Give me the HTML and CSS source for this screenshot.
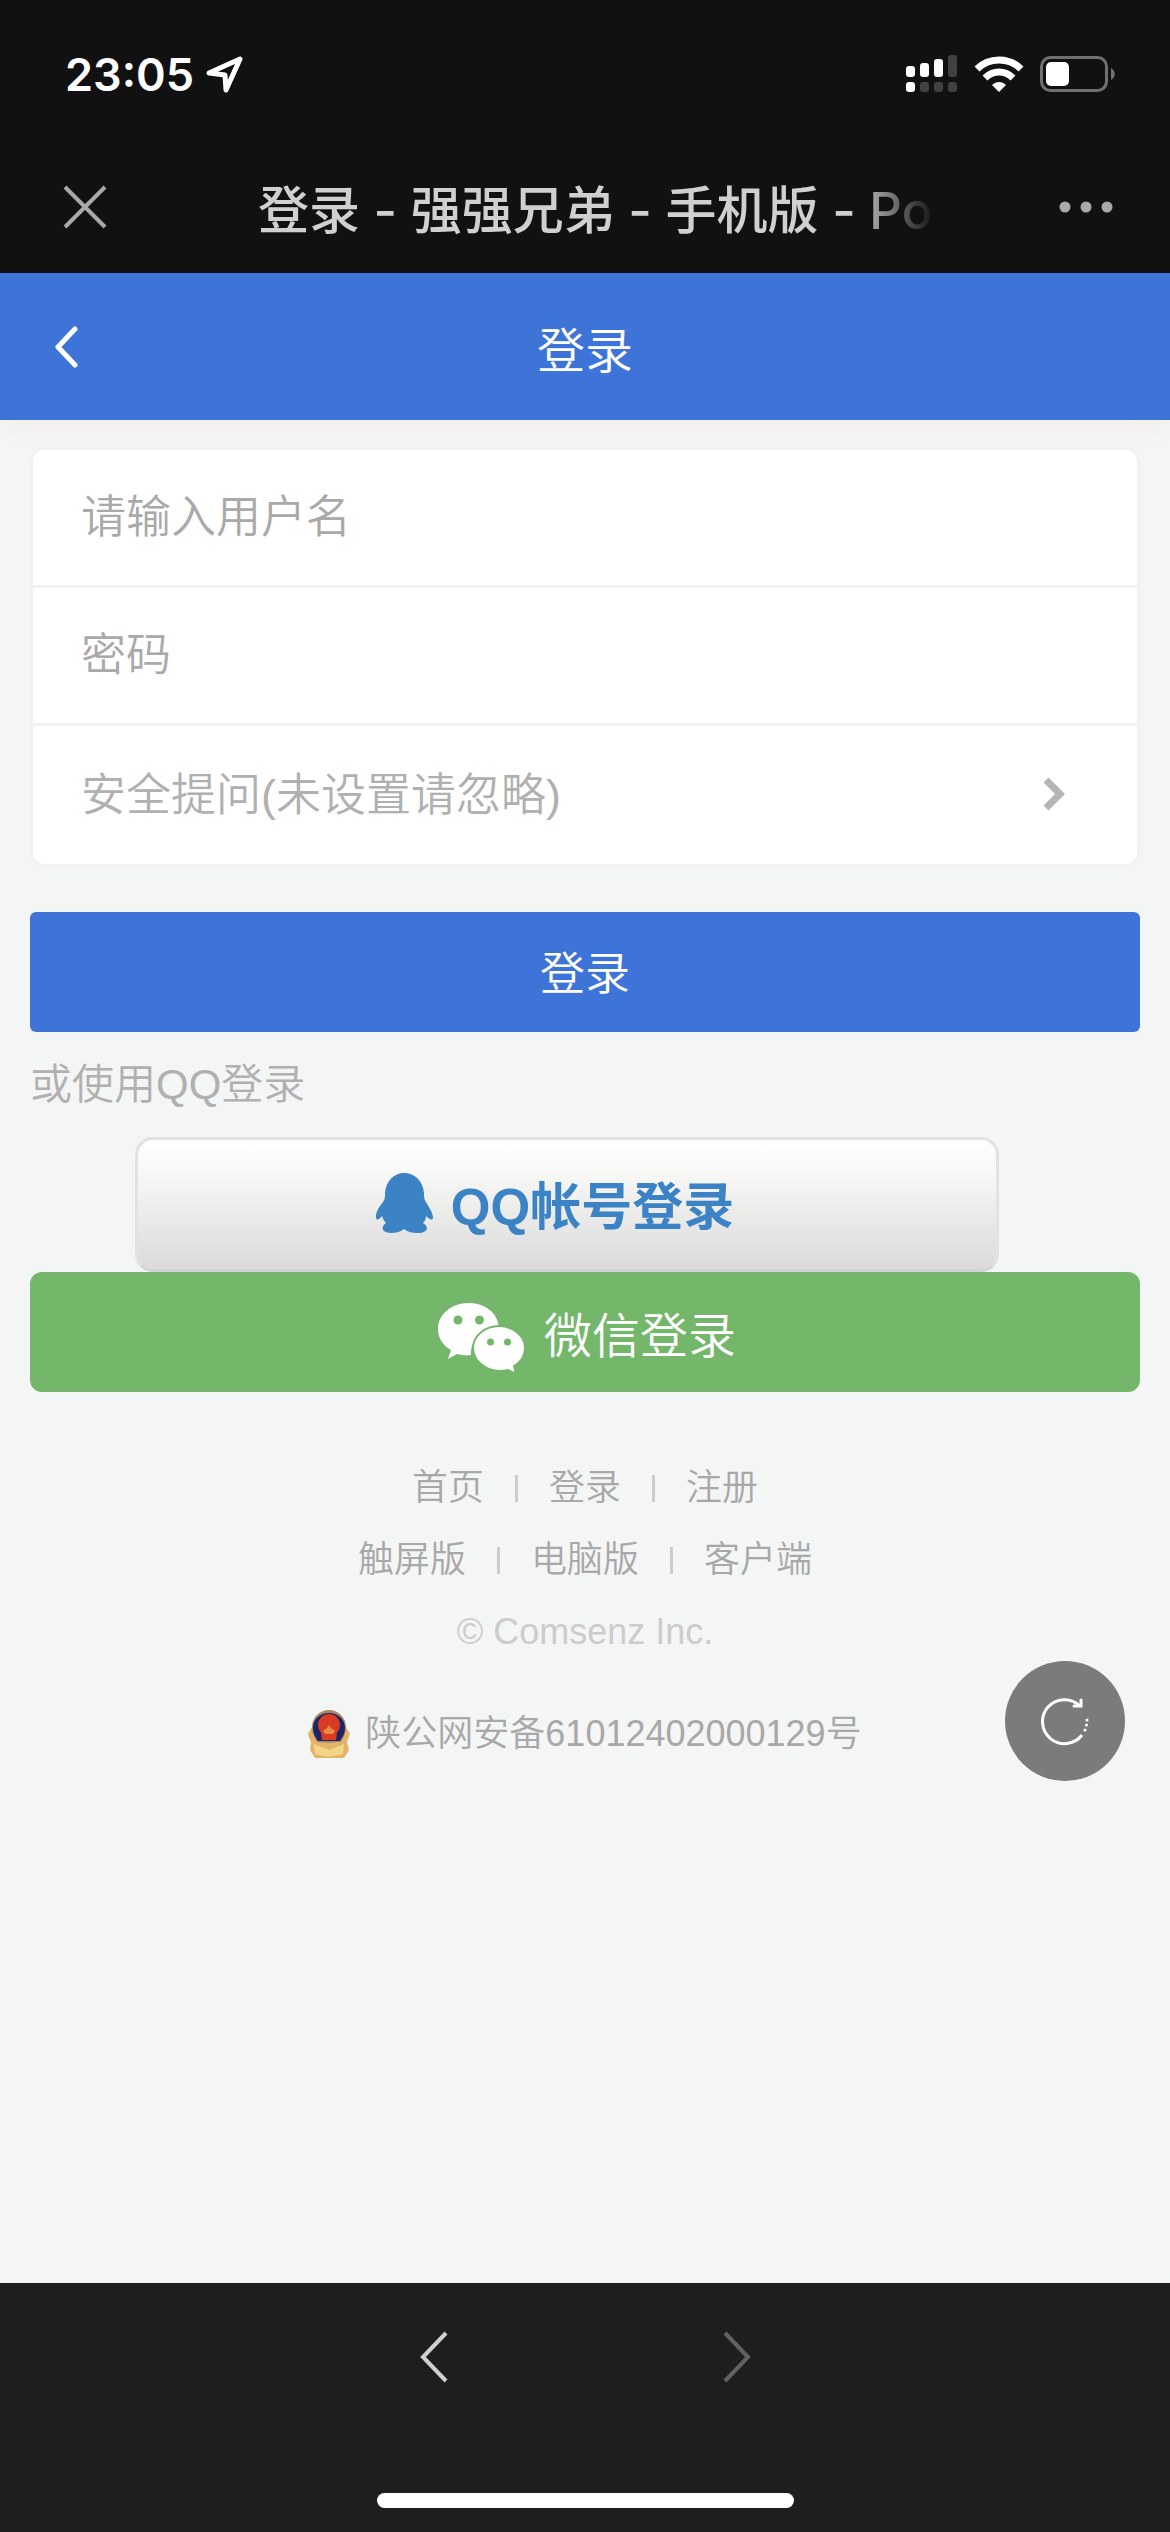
FILE: index.html
```html
<!DOCTYPE html>
<html lang="zh-CN">
<head>
  <meta charset="UTF-8">
  <meta name="viewport" content="width=device-width, initial-scale=1">
  <title>登录 - 强强兄弟 - 手机版</title>
  <link rel="stylesheet" href="styles.css">
</head>
<body>
  <div class="top">
    <div class="status">
      <span class="time">23:05</span>
      <svg class="location" width="37" height="37" viewBox="0 0 37 37"><path d="M3 17 L34 3 L20 34 L19 19 Z" fill="none" stroke="#fff" stroke-width="5" stroke-linejoin="round"/></svg>
      <div class="status-icons">
        <svg width="52" height="38" viewBox="0 0 52 38">
          <g fill="#fff">
            <rect x="0" y="11" width="9" height="11" rx="3"/>
            <rect x="14" y="8" width="9" height="14" rx="3"/>
            <rect x="28" y="4" width="9" height="18" rx="3"/>
            <rect x="0" y="27" width="9" height="10" rx="3"/>
          </g>
          <g fill="#414141">
            <rect x="42" y="0" width="9" height="22" rx="3"/>
            <rect x="14" y="27" width="9" height="10" rx="3"/>
            <rect x="28" y="27" width="9" height="10" rx="3"/>
            <rect x="42" y="27" width="9" height="10" rx="3"/>
          </g>
        </svg>
        <svg width="50" height="37" viewBox="0 0 50 37">
          <path d="M3 13 C15 1 35 1 47 13" fill="none" stroke="#fff" stroke-width="7"/>
          <path d="M11 22 C19 14 31 14 39 22" fill="none" stroke="#fff" stroke-width="7"/>
          <path d="M25 36 L18 29 C22 25 28 25 32 29 Z" fill="#fff"/>
        </svg>
        <svg width="76" height="37" viewBox="0 0 76 37">
          <rect x="1.5" y="1.5" width="65" height="33" rx="9" fill="none" stroke="#707070" stroke-width="3"/>
          <rect x="6" y="6" width="23" height="24" rx="5" fill="#fff"/>
          <path d="M71 12 C76 15 76 21 71 24 Z" fill="#707070"/>
        </svg>
      </div>
    </div>
    <div class="webview-bar">
      <button class="icon-btn" aria-label="关闭"><svg width="44" height="44" viewBox="0 0 44 44"><path d="M2 2 L42 42 M42 2 L2 42" stroke="#a9a9a9" stroke-width="4"/></svg></button>
      <div class="webview-title">登录 - 强强兄弟 - 手机版 - Pow</div>
      <button class="icon-btn" aria-label="更多"><svg width="54" height="12" viewBox="0 0 54 12"><g fill="#a9a9a9"><circle cx="6" cy="6" r="5.5"/><circle cx="27" cy="6" r="5.5"/><circle cx="48" cy="6" r="5.5"/></g></svg></button>
    </div>
  </div>

  <main>
    <header class="header">
      <a href="#" class="back" aria-label="返回"><svg width="24" height="42" viewBox="0 0 24 42"><path d="M21 3 L4 21 L21 39" fill="none" stroke="#fff" stroke-width="5" stroke-linecap="round" stroke-linejoin="round"/></svg></a>
      <h1>登录</h1>
    </header>

    <form class="login">
      <div class="fields">
        <input class="field" type="text" name="username" placeholder="请输入用户名" aria-label="请输入用户名">
        <input class="field" type="password" name="password" placeholder="密码" aria-label="密码">
        <div class="question">
          <select class="field" name="questionid" aria-label="安全提问">
            <option>安全提问(未设置请忽略)</option>
          </select>
          <svg class="arrow" width="22" height="34" viewBox="0 0 22 34"><path d="M3 3 L17 17 L3 31" fill="none" stroke="#b5b5b5" stroke-width="7"/></svg>
        </div>
      </div>
      <button class="btn submit" type="button">登录</button>
      <p class="or">或使用QQ登录</p>
      <button class="qq" type="button">
        <svg width="57" height="68" viewBox="0 0 57 60" preserveAspectRatio="none"><path d="M28 0 C39 0 47 8 48 20 C48 24 48 26 50 29 C53 34 57 40 57 45 C56 48 53 46 50 43 C50 46 49 48 47 50 C54 54 51 60 42 60 C36 60 32 59 28 56 C24 59 20 60 15 60 C6 60 4 54 10 50 C8 48 7 46 6 43 C4 46 1 48 0 45 C-1 40 3 34 7 29 C9 26 9 24 9 20 C10 8 18 0 28 0 Z" fill="#3b83c4"/></svg>
        <span>QQ帐号登录</span>
      </button>
      <button class="btn wechat" type="button">
        <svg width="88" height="72" viewBox="0 0 88 72">
          <path d="M30.5 0 C47 0 60 10 61 25 L61 26 C46 26 33 36 33 50 L33 52 C28 53 24 52 19 51 L10 56 L13 47 C4 42 0 34 0 26 C0 11 14 0 30.5 0 Z" fill="#fff"/>
          <path d="M61 23 C75 23 87 33 87 45 C87 53 83 59 76 63 L78 71 L70 67 C54 71 35 61 35 45 C35 33 47 23 61 23 Z" fill="#fff" stroke="#74b76a" stroke-width="2"/>
          <g fill="#74b76a"><circle cx="20" cy="17" r="4.5"/><circle cx="41.5" cy="17" r="4.5"/><circle cx="52.5" cy="39" r="3.5"/><circle cx="69.5" cy="39" r="3.5"/></g>
        </svg>
        <span>微信登录</span>
      </button>
    </form>

    <footer class="footer">
      <nav class="links"><a href="#">首页</a><i></i><a href="#">登录</a><i></i><a href="#">注册</a></nav>
      <nav class="links"><a href="#">触屏版</a><i></i><a href="#">电脑版</a><i></i><a href="#">客户端</a></nav>
      <p class="copyright">© Comsenz Inc.</p>
      <a href="#" class="record">
        <svg width="42" height="48" viewBox="0 0 42 48">
          <path d="M5 15 L0 24 L3 32 L2 40 L7 48 L36 48 L41 40 L39 32 L42 24 L37 15 Z" fill="#e3b468"/>
          <path d="M6 34 L21 40 L36 34 L35 44 L21 47 L7 44 Z" fill="#f3d588"/>
          <path d="M21 0 C31 0 38 8 38 17 C38 24 35 28 33 32 L21 33 L9 32 C7 28 4 24 4 17 C4 8 11 0 21 0 Z" fill="#a98a62"/>
          <path d="M21 3 C31 3 37 10 37 18 C37 24 34 28 32 31 L10 31 C8 28 5 24 5 18 C5 10 11 3 21 3 Z" fill="#1d2467"/>
          <circle cx="21" cy="15" r="11" fill="#d83a22"/>
          <path d="M13 22 L29 22 L28 30 L14 30 Z" fill="#d83a22"/>
          <path d="M15 21 L19 18 L21 15 L23 18 L27 21 L25 24 L17 24 Z" fill="#e98b45"/>
        </svg>
        <span>陕公网安备61012402000129号</span>
      </a>
    </footer>

    <button class="refresh" aria-label="刷新">
      <svg width="50" height="50" viewBox="0 0 50 50">
        <path d="M42 39 A22 22 0 1 1 40 10" fill="none" stroke="#fff" stroke-width="3"/>
        <path d="M41 4 V10 H34" fill="none" stroke="#fff" stroke-width="3" stroke-linecap="round"/>
        <g fill="#fff"><circle cx="47" cy="24" r="1.5"/><circle cx="46.5" cy="29" r="1.5"/><circle cx="45" cy="34" r="1.5"/></g>
      </svg>
    </button>
  </main>

  <div class="bottom">
    <div class="history">
      <button class="icon-btn" aria-label="后退"><svg width="28" height="52" viewBox="0 0 28 52"><path d="M26 2 L3 26 L26 50" fill="none" stroke="#d0d0d0" stroke-width="4"/></svg></button>
      <button class="icon-btn" aria-label="前进"><svg width="28" height="52" viewBox="0 0 28 52"><path d="M2 2 L25 26 L2 50" fill="none" stroke="#616161" stroke-width="4"/></svg></button>
    </div>
    <div class="home-indicator"></div>
  </div>
</body>
</html>
```

FILE: styles.css
```css
* {
  box-sizing: border-box;
}
body {
  margin: 0;
  min-height: 100vh;
  display: flex;
  flex-direction: column;
  background: #f4f6f6;
  font-family: "Liberation Sans", "Noto Sans CJK SC", sans-serif;
  font-weight: 350;
}
a {
  color: inherit;
  text-decoration: none;
}
button, input, select {
  font: inherit;
  border: 0;
  padding: 0;
}
h1, p {
  margin: 0;
  font-weight: inherit;
}
svg {
  display: block;
  flex: none;
}
.icon-btn {
  background: none;
}

/* system bar and webview title, above the header's shadow */
.top {
  position: relative;
  z-index: 1;
  background: #111;
}
.status {
  height: 140px;
  padding: 8px 54px 0 65px;
  display: flex;
  align-items: center;
  color: #fff;
}
.time {
  font-family: Inter, sans-serif;
  font-size: 45px;
  font-weight: 600;
}
.location {
  margin-left: 12px;
}
.status-icons {
  display: flex;
  align-items: center;
  gap: 16px;
  margin-left: auto;
}
.webview-bar {
  height: 133px;
  padding: 0 57px 0 63px;
  display: flex;
  align-items: center;
}
.webview-title {
  flex: 1;
  margin: 0 124px 0 151px;
  overflow: hidden;
  white-space: nowrap;
  color: #d0d0d0;
  font-family: Inter, "Noto Sans CJK SC", sans-serif;
  font-size: 51px;
  font-weight: 500;
  -webkit-mask-image: linear-gradient(to right, #000 88%, transparent);
  mask-image: linear-gradient(to right, #000 88%, transparent);
}

/* page */
main {
  flex: 1;
  position: relative;
}
.header {
  height: 147px;
  padding: 0 54px;
  display: flex;
  align-items: center;
  background: #3e74d8;
  color: #fff;
  box-shadow: 0 3px 30px #f2e9e8;
}
.header h1 {
  flex: 1;
  padding-right: 24px;
  font-size: 48px;
  text-align: center;
}
.login {
  padding: 27px 30px 0;
}
.fields {
  border: 3px solid #f2f2f2;
  border-radius: 15px;
  background: #fff;
  overflow: hidden;
}
.field {
  display: block;
  width: 100%;
  height: 138px;
  padding: 0 48px;
  border-bottom: 3px solid #f2f2f2;
  border-radius: 0;
  background: #fff;
  font-size: 45px;
}
.field::placeholder {
  color: #a9a9a9;
  opacity: 1;
}
.question {
  position: relative;
}
.question .field {
  appearance: none;
  border-bottom: 0;
  color: #b0b0b0;
}
.arrow {
  position: absolute;
  top: 51px;
  right: 72px;
  pointer-events: none;
}
.btn {
  width: 100%;
  height: 120px;
  display: flex;
  align-items: center;
  justify-content: center;
  color: #fff;
}
.submit {
  margin-top: 45px;
  padding-bottom: 4px;
  border-radius: 6px;
  background: #3e74d8;
  font-size: 45px;
}
.or {
  padding: 23px 0 22px;
  color: #b0b0b0;
  font-size: 42px;
  line-height: 60px;
}
.qq {
  width: 864px;
  max-width: 100%;
  height: 135px;
  margin-left: 105px;
  padding: 0 24px 4px 0;
  display: flex;
  align-items: center;
  justify-content: center;
  gap: 18px;
  border: 3px solid #e3e2e2;
  border-bottom-color: #d6d3d4;
  border-radius: 18px;
  background: linear-gradient(#fff, #f9f9f8 22%, #ececeb 55%, #dcdadb);
  color: #3b83c4;
  font-size: 51px;
  font-weight: 700;
}
.qq svg {
  height: 60px;
}
.wechat {
  gap: 18px;
  padding-left: 4px;
  border-radius: 12px;
  background: #74b76a;
  font-size: 48px;
}
.wechat svg {
  margin-top: 14px;
}

.footer {
  padding-top: 60px;
  display: flex;
  flex-direction: column;
  align-items: center;
  color: #a8a8a8;
  font-size: 36px;
  line-height: 72px;
}
.links {
  display: flex;
  align-items: center;
}
.links i {
  width: 3px;
  height: 27px;
  margin: 0 31px;
  background: #ccc;
}
.copyright {
  color: #ccc;
}
.record {
  margin-top: 30px;
  display: flex;
  align-items: center;
  gap: 15px;
}
.refresh {
  position: absolute;
  right: 45px;
  bottom: 502px;
  width: 120px;
  height: 120px;
  display: flex;
  align-items: center;
  justify-content: center;
  border-radius: 50%;
  background: #7b7b7b;
}

/* webview toolbar */
.bottom {
  height: 249px;
  padding: 48px 0 24px;
  display: flex;
  flex-direction: column;
  align-items: center;
  justify-content: space-between;
  background: #1e1e1e;
}
.history {
  display: flex;
  gap: 275px;
}
.home-indicator {
  width: 417px;
  height: 15px;
  border-radius: 8px;
  background: #fff;
}
```
